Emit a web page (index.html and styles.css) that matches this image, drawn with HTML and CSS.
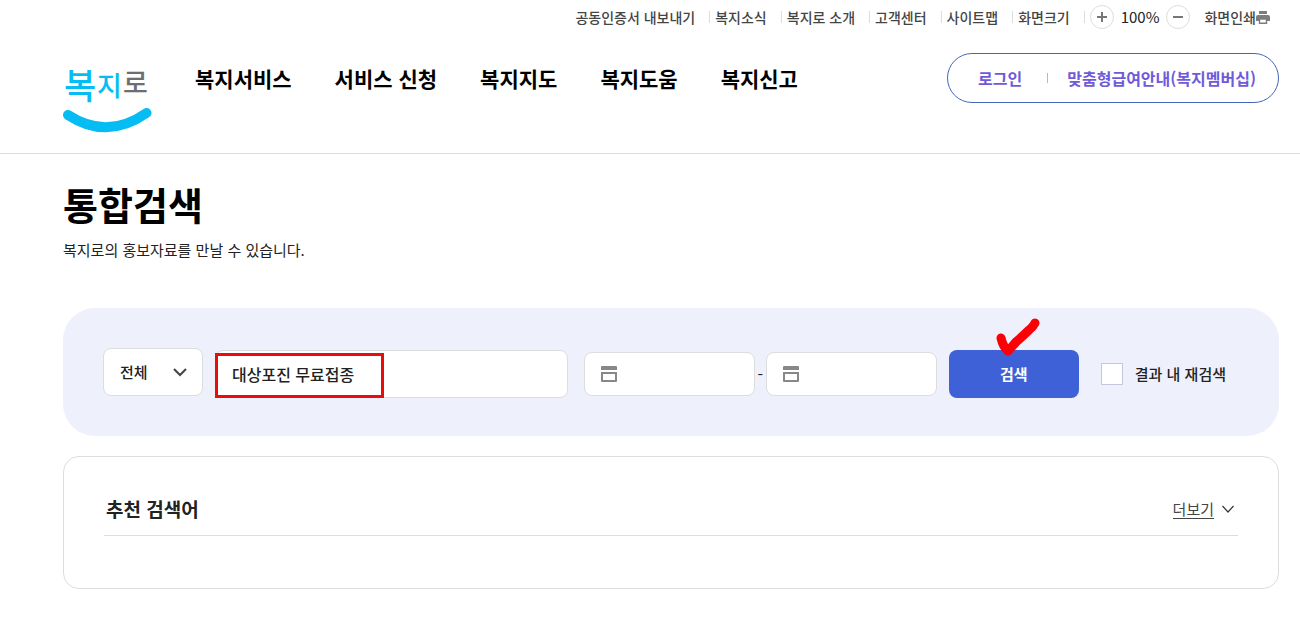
FILE: index.html
```html
<!DOCTYPE html>
<html lang="ko">
  <head>
    <meta charset="UTF-8" />
    <meta name="viewport" content="width=device-width, initial-scale=1.0" />
    <title>통합검색 | 복지로</title>

    <link rel="stylesheet" href="styles.css">
  </head>

  <body>
    <header class="header">
      <ul class="util">
        <li><a href="#">공동인증서 내보내기</a></li>
        <li><a href="#">복지소식</a></li>
        <li><a href="#">복지로 소개</a></li>
        <li><a href="#">고객센터</a></li>
        <li><a href="#">사이트맵</a></li>
        <li>화면크기</li>
        <li class="zoom">
          <button type="button" class="zoom-btn" aria-label="확대">
            <svg width="10" height="10" viewBox="0 0 10 10"><path d="M0 5h10M5 0v10" /></svg>
          </button>
          <span>100%</span>
          <button type="button" class="zoom-btn" aria-label="축소">
            <svg width="10" height="10" viewBox="0 0 10 10"><path d="M0 5h10" /></svg>
          </button>
        </li>
        <li class="print">
          <a href="#">화면인쇄<svg width="14" height="13" viewBox="0 0 14 13">
            <path fill="#7d7d7d" d="M3 0h8v3H3zM2 4h10a2 2 0 0 1 2 2v4h-3V8H3v2H0V6a2 2 0 0 1 2-2z" />
            <path fill="none" stroke="#7d7d7d" stroke-width="1.4" d="M3.5 8h7v4.2h-7z" />
          </svg></a>
        </li>
      </ul>

      <div class="gnb">
        <a href="#" class="logo" aria-label="복지로">
          <svg width="90" height="82" viewBox="0 0 90 82">
            <text class="logo-big" x="1" y="46">복</text>
            <text class="logo-mid" x="34" y="43">지</text>
            <text class="logo-mid gray" x="60" y="40">로</text>
            <path d="M5 62Q44 87.500 83.500 60" fill="none" stroke="#06bdf3" stroke-width="10" stroke-linecap="round" />
          </svg>
        </a>
        <nav class="menu">
          <a href="#">복지서비스</a>
          <a href="#">서비스 신청</a>
          <a href="#">복지지도</a>
          <a href="#">복지도움</a>
          <a href="#">복지신고</a>
        </nav>
        <div class="member">
          <a href="#">로그인</a>
          <a href="#">맞춤형급여안내(복지멤버십)</a>
        </div>
      </div>
    </header>

    <main class="content">
      <h1>통합검색</h1>
      <p class="desc">복지로의 홍보자료를 만날 수 있습니다.</p>

      <form class="search">
        <div class="select">
          <select aria-label="검색 구분">
            <option>전체</option>
          </select>
          <svg width="14" height="9" viewBox="0 0 14 9"><path d="M1 1l6 6 6-6" /></svg>
        </div>
        <div class="keyword">
          <input type="text" aria-label="검색어" value="대상포진 무료접종">
          <span class="mark-box"></span>
        </div>
        <div class="period">
          <div class="date">
            <input type="text" aria-label="시작일">
            <svg width="16" height="16" viewBox="0 0 16 16"><path d="M1 0h14a1 1 0 0 1 1 1v3H0V1a1 1 0 0 1 1-1zM0 6h16v9a1 1 0 0 1-1 1H1a1 1 0 0 1-1-1zM2 8v6h12V8z" fill="#888" fill-rule="evenodd" /></svg>
          </div>
          <span class="dash">-</span>
          <div class="date">
            <input type="text" aria-label="종료일">
            <svg width="16" height="16" viewBox="0 0 16 16"><path d="M1 0h14a1 1 0 0 1 1 1v3H0V1a1 1 0 0 1 1-1zM0 6h16v9a1 1 0 0 1-1 1H1a1 1 0 0 1-1-1zM2 8v6h12V8z" fill="#888" fill-rule="evenodd" /></svg>
          </div>
        </div>
        <div class="submit">
          <button type="submit">검색</button>
          <svg class="mark-check" width="46" height="40" viewBox="0 0 46 40">
            <path d="M5 20Q7 29 12 33Q15 30 20 24Q28 17 33 12Q37 9 39 5" />
          </svg>
        </div>
        <label class="again"><input type="checkbox">결과 내 재검색</label>
      </form>

      <section class="recommend">
        <div class="recommend-head">
          <h2>추천 검색어</h2>
          <a href="#" class="more"><span>더보기</span><svg width="12" height="8" viewBox="0 0 12 8"><path d="M0.500 1l5.500 6 5.500-6" /></svg></a>
        </div>
      </section>
    </main>
  </body>
</html>
```
FILE: styles.css
```css
* {
  margin: 0;
  padding: 0;
  box-sizing: border-box;
}

body {
  background: #fff;
  color: #222;
  font-family: "Noto Sans CJK KR", "Noto Sans", sans-serif;
  font-size: 16px;
  line-height: 24px;
}

a {
  color: inherit;
  text-decoration: none;
}

ul {
  list-style: none;
}

svg {
  display: block;
}

input,
select,
button {
  font: inherit;
  color: inherit;
}

/* header */
.header {
  border-bottom: 1px solid #ddd;
}

.util {
  display: flex;
  align-items: center;
  justify-content: flex-end;
  height: 34px;
  padding-right: 30px;
  color: #444;
  font-size: 14px;
  font-weight: 500;
}

.util li {
  display: flex;
  align-items: center;
  line-height: 12px;
  padding-right: 14px;
}

.util li + li {
  padding-left: 5px;
  border-left: 1px solid #ddd;
}

.util .zoom {
  gap: 7px;
  color: #222;
  font-size: 15px;
  font-weight: 400;
  height: 12px;
}

.zoom-btn {
  display: flex;
  align-items: center;
  justify-content: center;
  width: 24px;
  height: 24px;
  border: 1px solid #ddd;
  border-radius: 50%;
  background: #fff;
  cursor: pointer;
}

.zoom-btn path {
  stroke: #777;
  stroke-width: 2;
}

.util .print {
  padding: 0;
  border: 0;
}

.print a {
  display: flex;
  align-items: center;
}

.gnb {
  display: flex;
  align-items: flex-start;
  padding: 19px 21px 18px 63px;
}

.logo {
  margin-right: 42px;
}

.logo text {
  fill: #06bdf3;
  font-weight: 500;
}

.logo .logo-big {
  font-size: 35px;
}

.logo .logo-mid {
  font-size: 27px;
}

.logo .gray {
  fill: #6d6e71;
}

.menu {
  display: flex;
  flex: 1;
  gap: 43px;
  padding-top: 13px;
  color: #000;
  font-size: 21px;
  font-weight: 700;
  white-space: nowrap;
}

.member {
  display: flex;
  align-items: center;
  height: 50px;
  padding: 0 22px 0 30px;
  border: 1px solid #4466b8;
  border-radius: 25px;
  color: #6f5bd9;
  font-weight: 700;
  white-space: nowrap;
}

.member a {
  line-height: 10px;
}

.member a + a {
  margin-left: 25px;
  padding-left: 19px;
  border-left: 1px solid #b5b5d0;
}

/* search */
.content {
  padding: 24px 21px 32px 63px;
}

h1 {
  color: #000;
  font-size: 38px;
  font-weight: 700;
  line-height: 52px;
}

.desc {
  margin-top: 8px;
  font-size: 15px;
}

.search {
  display: flex;
  align-items: center;
  height: 128px;
  margin-top: 46px;
  padding: 4px 53px 0 40px;
  border-radius: 32px;
  background: #eef1fb;
  white-space: nowrap;
}

.search input[type="text"],
.search select {
  display: block;
  width: 100%;
  border: 1px solid #ddd;
  border-radius: 8px;
  background: #fff;
  font-weight: 500;
}

.select {
  position: relative;
  width: 100px;
  margin: 0 12px 4px 0;
}

.search select {
  height: 48px;
  padding-left: 16px;
  font-size: 15px;
  appearance: none;
}

.select svg {
  position: absolute;
  top: 20px;
  right: 16px;
  pointer-events: none;
}

.select path {
  fill: none;
  stroke: #444;
  stroke-width: 2;
}

.keyword {
  position: relative;
  flex: 1;
}

.keyword input {
  height: 48px;
  padding: 0 16px;
}

.mark-box {
  position: absolute;
  top: 3px;
  left: 0;
  width: 169px;
  height: 45px;
  border: 3px solid #e80c0c;
  pointer-events: none;
}

.period {
  display: flex;
  align-items: center;
  margin: 0 12px 0 16px;
}

.date {
  position: relative;
  width: 171px;
}

.date input {
  height: 44px;
  padding: 0 16px 0 44px;
}

.date svg {
  position: absolute;
  top: 14px;
  left: 17px;
}

.dash {
  width: 11px;
  text-align: center;
}

.submit {
  position: relative;
}

.submit button {
  display: block;
  width: 130px;
  height: 48px;
  border: 0;
  border-radius: 8px;
  background: #3f61d7;
  color: #fff;
  font-size: 15px;
  font-weight: 700;
  cursor: pointer;
}

.mark-check {
  position: absolute;
  top: -32px;
  left: 47px;
  pointer-events: none;
}

.mark-check path {
  fill: none;
  stroke: #fb0007;
  stroke-width: 9;
  stroke-linecap: round;
  stroke-linejoin: round;
}

.again {
  display: flex;
  align-items: center;
  gap: 12px;
  margin-left: 22px;
  font-size: 15px;
  font-weight: 500;
}

.again input {
  width: 22px;
  height: 22px;
  border: 1px solid #c3c6dc;
  background: #fff;
  appearance: none;
}

/* recommend */
.recommend {
  min-height: 133px;
  margin-top: 20px;
  padding: 38px 40px;
  border: 1px solid #ddd;
  border-radius: 16px;
}

.recommend-head {
  display: flex;
  align-items: center;
  justify-content: space-between;
  height: 41px;
  padding: 0 4px 12px 2px;
  border-bottom: 1px solid #ddd;
}

.recommend h2 {
  font-size: 19px;
  font-weight: 700;
}

.more {
  display: flex;
  align-items: center;
  gap: 8px;
  color: #444;
  font-size: 15px;
}

.more span {
  line-height: 18px;
  border-bottom: 1px solid #444;
}

.more path {
  fill: none;
  stroke: #333;
  stroke-width: 1.2;
}
```
